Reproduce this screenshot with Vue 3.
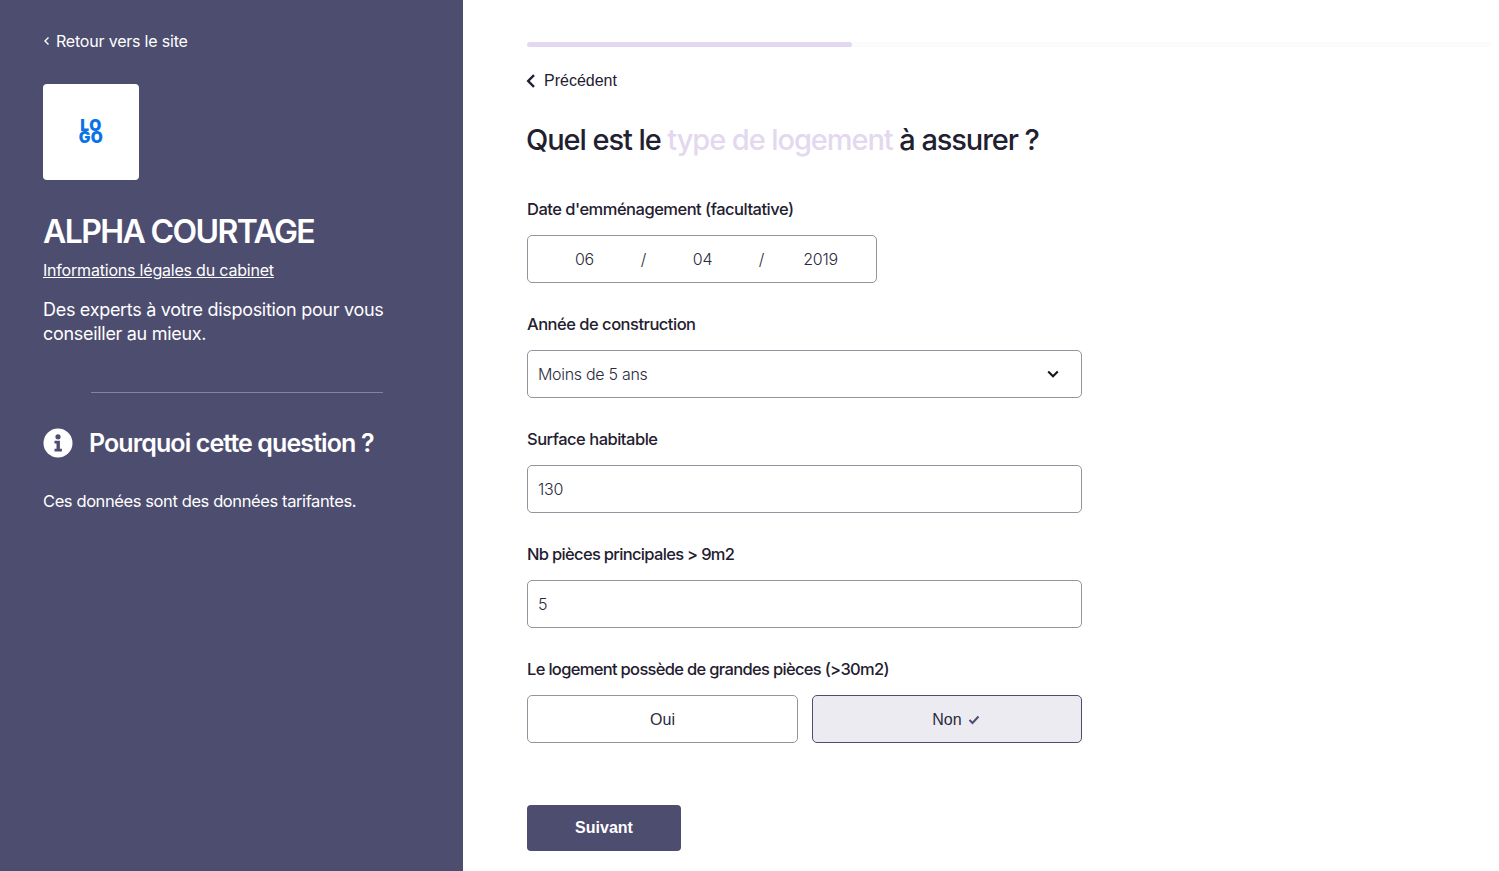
<template>
  <div class="page">
    <aside class="sidebar">
      <a class="back-site">
        <svg class="back-site-icon" viewBox="0 0 8 10" width="8" height="10">
          <path d="M5.5 1.5 2 5l3.5 3.5" fill="none" stroke="currentColor" stroke-width="1.4" />
        </svg>
        Retour vers le site
      </a>
      <div class="logo-box">
        <div class="logo">LO GO</div>
      </div>
      <h1 class="cabinet-name">ALPHA COURTAGE</h1>
      <a class="legal-link">Informations légales du cabinet</a>
      <p class="tagline">Des experts à votre disposition pour vous conseiller au mieux.</p>
      <hr class="divider" />
      <div class="why-title">
        <svg class="info-icon" viewBox="0 0 30 30" width="30" height="30">
          <circle cx="15" cy="15" r="14.5" fill="#fff" />
          <circle cx="15" cy="8.8" r="2.6" fill="#4d4d70" />
          <path d="M11.5 12.8h5.4v8h2v2.6h-7.4v-2.6h2v-5.4h-2z" fill="#4d4d70" />
        </svg>
        <h2>Pourquoi cette question ?</h2>
      </div>
      <p class="why-text">Ces données sont des données tarifantes.</p>
    </aside>

    <main class="content">
      <div class="progress"><div class="progress-fill" :style="{ width: progress + 'px' }"></div></div>
      <a class="previous">
        <svg viewBox="0 0 10 14" width="10" height="14">
          <path d="M8 1.2 2.2 7 8 12.8" fill="none" stroke="#1f2030" stroke-width="2.4" />
        </svg>
        Précédent
      </a>
      <h2 class="question">Quel est le <span class="accent">type de logement</span> à assurer ?</h2>

      <div class="field">
        <label>Date d'emménagement (facultative)</label>
        <div class="box date-box">
          <span>{{ date.day }}</span>
          <span>/</span>
          <span>{{ date.month }}</span>
          <span>/</span>
          <span>{{ date.year }}</span>
        </div>
      </div>

      <div class="field">
        <label>Année de construction</label>
        <div class="box select-box">
          <span>Moins de 5 ans</span>
          <svg viewBox="0 0 12 8" width="12" height="8">
            <path d="M1.2 1.5 6 6.2l4.8-4.7" fill="none" stroke="#15151f" stroke-width="2.1" />
          </svg>
        </div>
      </div>

      <div class="field">
        <label>Surface habitable</label>
        <div class="box">130</div>
      </div>

      <div class="field">
        <label class="tight">Nb pièces principales &gt; 9m2</label>
        <div class="box">5</div>
      </div>

      <div class="field">
        <label class="tight">Le logement possède de grandes pièces (&gt;30m2)</label>
        <div class="choices">
          <div class="box choice">Oui</div>
          <div class="box choice selected">
            <span class="choice-label">
              Non
              <svg class="choice-check" viewBox="0 0 12 10" width="12" height="10">
                <path d="M1.5 5 4.5 8l6-6.5" fill="none" stroke="#4d4d70" stroke-width="2" />
              </svg>
            </span>
          </div>
        </div>
      </div>

      <button class="next">Suivant</button>
    </main>
  </div>
</template>

<script setup>
import { ref, reactive } from "vue";

const progress = ref(325);
const date = reactive({ day: "06", month: "04", year: "2019" });
</script>

<style>
html,
body {
  margin: 0;
  background: #fff;
}
</style>

<style scoped>
.page {
  display: flex;
  height: 871px;
  overflow: hidden;
  font-family: Inter, "Liberation Sans", sans-serif;
  color: #1f2030;
}

.sidebar {
  width: 463px;
  flex-shrink: 0;
  box-sizing: border-box;
  padding: 31px 70px 0 43px;
  background: #4d4d70;
  color: #fff;
}

.back-site {
  display: flex;
  align-items: center;
  gap: 5px;
  height: 20px;
  font-size: 16px;
  letter-spacing: -0.2px;
}

.logo-box {
  display: flex;
  align-items: center;
  justify-content: center;
  width: 96px;
  height: 96px;
  margin-top: 33px;
  background: #fff;
  border-radius: 4px;
}

.logo {
  width: 26px;
  color: #0a74e6;
  font-size: 15.5px;
  font-weight: 900;
  line-height: 12.5px;
  letter-spacing: 0.5px;
  text-align: center;
}

.cabinet-name {
  margin: 33px 0 0;
  font-size: 32px;
  font-weight: 600;
  line-height: 38px;
  letter-spacing: -1.6px;
}

.legal-link {
  display: block;
  margin-top: 9px;
  font-size: 16px;
  line-height: 20px;
  letter-spacing: -0.2px;
  text-decoration: underline;
}

.tagline {
  margin: 18px 0 0;
  font-size: 18px;
  line-height: 24px;
  letter-spacing: -0.3px;
}

.divider {
  width: 292px;
  height: 1px;
  margin: 46px 0 0 48px;
  border: 0;
  background: #84849b;
}

.why-title {
  display: flex;
  align-items: center;
  gap: 16px;
  margin-top: 34px;
}

.why-title h2 {
  margin: 0;
  font-size: 25px;
  font-weight: 600;
  line-height: 32px;
  letter-spacing: -0.9px;
  white-space: nowrap;
}

.info-icon {
  flex-shrink: 0;
}

.why-text {
  margin: 31px 0 0;
  font-size: 16.5px;
  line-height: 22px;
  letter-spacing: -0.4px;
}

.content {
  flex: 1;
  padding: 42px 7px 0 64px;
}

.progress {
  height: 5px;
  background: #fbfafd;
  border-radius: 3px;
}

.progress-fill {
  height: 100%;
  background: #e3d8f0;
  border-radius: 3px;
}

.previous {
  display: flex;
  align-items: center;
  gap: 8px;
  margin-top: 24px;
  height: 20px;
  margin-left: -1px;
  font-family: "Liberation Sans", Arial, sans-serif;
  font-size: 16px;
}

.question {
  margin: 27px 0 0 -1px;
  font-size: 29px;
  font-weight: 500;
  line-height: 44px;
  letter-spacing: -1.07px;
}

.accent {
  color: #e3d8f0;
}

.field {
  width: 555px;
  margin-top: 30px;
}

.question + .field {
  margin-top: 36px;
}

.field label {
  display: block;
  height: 22px;
  margin-bottom: 15px;
  font-size: 16.5px;
  font-weight: 500;
  line-height: 22px;
  letter-spacing: -0.5px;
}

.field label.tight {
  letter-spacing: -0.68px;
}

.box {
  display: flex;
  align-items: center;
  box-sizing: border-box;
  height: 48px;
  padding: 0 10px;
  border: 1px solid #94949f;
  border-radius: 5px;
  background: #fff;
  font-size: 16px;
  font-weight: 300;
  letter-spacing: -0.3px;
  color: #2a2b3e;
}

.date-box {
  display: grid;
  grid-template-columns: repeat(5, 59px);
  width: 350px;
  padding: 0 0 0 27px;
  text-align: center;
}

.select-box {
  justify-content: space-between;
  padding-right: 22px;
}

.choices {
  display: grid;
  grid-template-columns: 271px 270px;
  gap: 14px;
}

.choice {
  justify-content: center;
  padding-top: 1px;
  font-family: "Liberation Sans", Arial, sans-serif;
  font-weight: 400;
  letter-spacing: 0;
}

.choice.selected {
  border-color: #4d4d70;
  background: #ecebf1;
}

.choice-label {
  position: relative;
}

.choice-check {
  position: absolute;
  top: 4px;
  left: calc(100% + 6px);
}

.next {
  display: block;
  width: 154px;
  height: 46px;
  margin-top: 62px;
  border: 0;
  border-radius: 4px;
  background: #4d4d70;
  color: #fff;
  font-family: "Liberation Sans", Arial, sans-serif;
  font-size: 16px;
  font-weight: 700;
}
</style>
